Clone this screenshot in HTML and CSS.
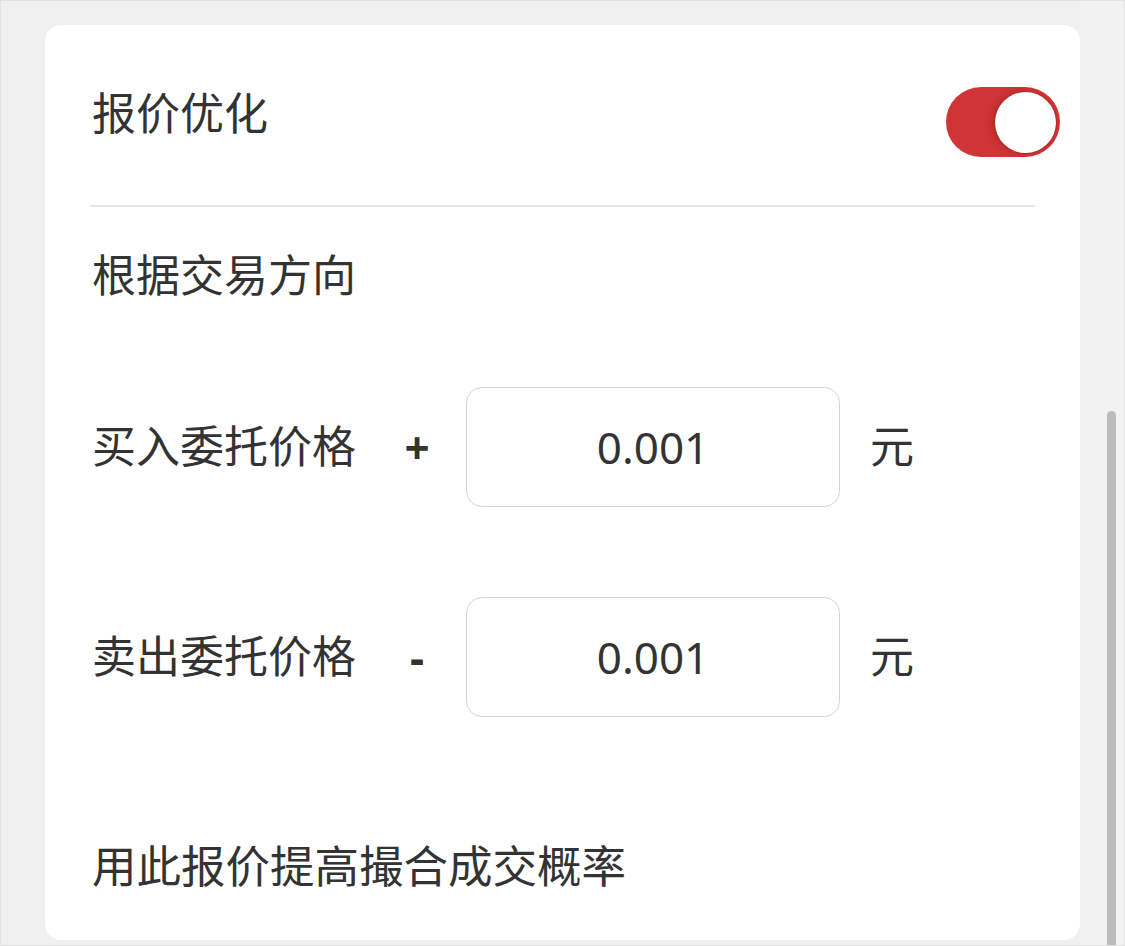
FILE: index.html
```html
<!DOCTYPE html>
<html lang="zh-CN">
    <head>
        <meta charset="UTF-8">
        <title>报价优化</title>
        <link rel="stylesheet" href="styles.css">
    </head>

    <body>
        <div id="page">
            <div id="content">
                <div class="card">
                    <div class="card-head">
                        <span class="title">报价优化</span>
                        <div class="toggle on"><div class="knob"></div></div>
                    </div>
                    <div class="divider"></div>

                    <div class="subtitle">根据交易方向</div>

                    <div class="price-row first">
                        <span class="label">买入委托价格</span>
                        <span class="sign">+</span>
                        <div class="price-box">0.001</div>
                        <span class="unit">元</span>
                    </div>

                    <div class="price-row">
                        <span class="label">卖出委托价格</span>
                        <span class="sign">-</span>
                        <div class="price-box">0.001</div>
                        <span class="unit">元</span>
                    </div>

                    <div class="note">用此报价提高撮合成交概率</div>
                </div>
            </div>

            <div id="scrollbar">
                <div class="thumb"></div>
            </div>
        </div>
    </body>
</html>
```

FILE: styles.css
```css
html, body {
    margin: 0;
    padding: 0;
}

body {
    background-color: #f0f0f0;
    color: #333;
    font-family: "Noto Sans", "Noto Sans CJK SC", sans-serif;
}

#page {
    display: flex;
    width: 1125px;
    height: 946px;
    box-sizing: border-box;
    border: 1px solid #e2e2e2;
    overflow: hidden;
}

#content {
    width: 1079px;
    padding: 24px 0 0 44px;
    box-sizing: border-box;
}

.card {
    background: #fff;
    border-radius: 16px;
    height: 915px;
    box-sizing: border-box;
}

.card-head {
    display: flex;
    justify-content: space-between;
    align-items: center;
    height: 180px;
    padding-left: 47px;
}

.title {
    font-size: 44px;
    line-height: 60px;
    margin-bottom: 4px;
}

.toggle {
    width: 114px;
    height: 70px;
    border-radius: 35px;
    background: #d03434;
    margin: 14px 20px 0 0;
    display: flex;
    align-items: center;
    justify-content: flex-end;
    padding: 0 4px;
    box-sizing: border-box;
}

.knob {
    width: 61px;
    height: 61px;
    border-radius: 50%;
    background: #fff;
    box-shadow: 0 0 0 1px #b52a2a, -3px 0 6px rgba(120, 20, 20, 0.35);
}

.divider {
    height: 2px;
    background: #e6e6e6;
    margin: 0 45px 0 45px;
}

.subtitle {
    font-size: 44px;
    line-height: 60px;
    margin-top: 38px;
    padding-left: 47px;
}

.price-row {
    display: grid;
    grid-template-columns: 276px 98px 374px auto;
    align-items: center;
    padding-left: 47px;
    margin-top: 90px;
    font-size: 44px;
}

.price-row.first {
    margin-top: 82px;
}

.label, .unit {
    padding-bottom: 6px;
}

.sign {
    text-align: center;
    font-weight: bold;
}

.price-box {
    height: 120px;
    box-sizing: border-box;
    border: 1px solid #d4d4d4;
    border-radius: 16px;
    display: flex;
    align-items: center;
    justify-content: center;
    color: #333;
}

.unit {
    padding-left: 30px;
}

.note {
    font-size: 44.5px;
    line-height: 60px;
    margin-top: 119px;
    padding-left: 47px;
}

#scrollbar {
    flex: 1;
    background: #f2f2f2;
    position: relative;
}

#scrollbar .thumb {
    position: absolute;
    left: 27px;
    top: 410px;
    width: 9px;
    height: 600px;
    border-radius: 5px 5px 0 0;
    background: #bbb;
}
```
